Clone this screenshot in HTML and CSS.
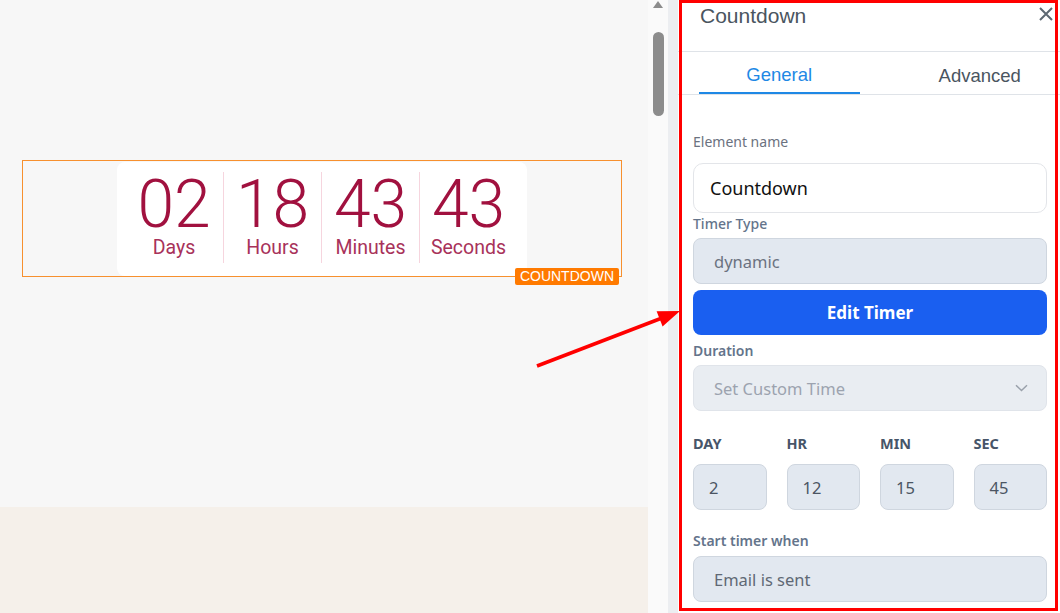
FILE: index.html
```html
<!DOCTYPE html>
<html lang="en">
<head>
<meta charset="utf-8">
<title>Countdown element settings</title>
<link rel="stylesheet" href="styles.css">
</head>
<body>
<div class="app">
  <main class="canvas">
    <section class="stage">
      <div class="element">
        <div class="timer">
          <div class="unit"><span class="num">02</span><span class="cap">Days</span></div>
          <div class="unit"><span class="num">18</span><span class="cap">Hours</span></div>
          <div class="unit"><span class="num">43</span><span class="cap">Minutes</span></div>
          <div class="unit"><span class="num">43</span><span class="cap">Seconds</span></div>
        </div>
        <span class="tag">COUNTDOWN</span>
      </div>
    </section>
    <section class="band"></section>
  </main>

  <div class="scroll">
    <span class="scroll-up"></span>
    <span class="thumb"></span>
  </div>
  <div class="gutter"></div>

  <aside class="panel">
    <header class="head">
      <h1 class="title">Countdown</h1>
      <button class="close" type="button" aria-label="Close">
        <svg width="14" height="14" viewBox="0 0 14 14"><path d="M1 1L13 13M13 1L1 13" stroke="#5d6872" stroke-width="2" fill="none"/></svg>
      </button>
    </header>

    <nav class="tabs">
      <span class="tab active">General</span>
      <span class="tab">Advanced</span>
    </nav>

    <div class="form">
      <div class="label plain">Element name</div>
      <div class="field text">Countdown</div>

      <div class="label mid l-type">Timer Type</div>
      <div class="field f-type">dynamic</div>

      <button class="primary" type="button">Edit Timer</button>

      <div class="label strong l-dur">Duration</div>
      <div class="field select">
        <span>Set Custom Time</span>
        <svg width="13" height="8" viewBox="0 0 13 8"><path d="M1 1.2L6.5 6.5L12 1.2" stroke="#9aa1ab" stroke-width="1.5" fill="none"/></svg>
      </div>

      <div class="units">
        <div class="unit-col"><div class="unit-label">DAY</div><div class="field small">2</div></div>
        <div class="unit-col"><div class="unit-label">HR</div><div class="field small">12</div></div>
        <div class="unit-col"><div class="unit-label">MIN</div><div class="field small">15</div></div>
        <div class="unit-col"><div class="unit-label">SEC</div><div class="field small">45</div></div>
      </div>

      <div class="label strong l-start">Start timer when</div>
      <div class="field f-start">Email is sent</div>
    </div>
  </aside>

  <svg class="pointer" width="1060" height="613" viewBox="0 0 1060 613">
    <line x1="537" y1="366" x2="662" y2="318" stroke="#ff0000" stroke-width="3.5"/>
    <polygon points="680,311 662.6,326.6 656.6,311.2" fill="#ff0000"/>
  </svg>
  <div class="focus"></div>
</div>
</body>
</html>
```

FILE: styles.css
```css
* { box-sizing: border-box; }

html, body {
  margin: 0;
  height: 100%;
}

body {
  font-family: "Noto Sans", "Open Sans", sans-serif;
  overflow: hidden;
  background: #fff;
}

.app {
  position: relative;
  display: flex;
  width: 1060px;
  height: 613px;
}

/* ---------- canvas ---------- */
.canvas {
  width: 648px;
  display: flex;
  flex-direction: column;
}

.stage {
  height: 507px;
  background: #f7f7f7;
  padding: 160px 0 0 22px;
}

.band {
  flex: 1;
  background: #f5f0ea;
}

.element {
  position: relative;
  width: 600px;
  height: 117px;
  border: 1px solid #f7902e;
  display: flex;
  justify-content: center;
  align-items: flex-end;
}

.timer {
  width: 410px;
  height: 114px;
  background: #fff;
  border-radius: 8px;
  display: flex;
  padding: 10px 10px 13px 8px;
}

.unit {
  width: 98px;
  flex: none;
  display: flex;
  flex-direction: column;
  align-items: center;
}

.unit + .unit {
  border-left: 1px solid #f6d5de;
}

.num {
  font-family: Roboto, sans-serif;
  font-weight: 350;
  font-size: 66px;
  line-height: 58px;
  color: #a1113f;
  margin-top: 4px;
}

.cap {
  font-family: Roboto, sans-serif;
  font-size: 19.5px;
  line-height: 22px;
  color: #a8325a;
  margin-top: 3px;
}

.tag {
  position: absolute;
  right: 2px;
  bottom: -9px;
  height: 17px;
  padding: 0 5px;
  border-radius: 2px;
  background: #ff7a00;
  color: #fff;
  font-family: "Liberation Sans", Arial, sans-serif;
  font-size: 14px;
  line-height: 17px;
}

/* ---------- scrollbar ---------- */
.scroll {
  width: 20px;
  background: #fafafa;
  display: flex;
  flex-direction: column;
  align-items: center;
  padding-top: 1px;
}

.scroll-up {
  width: 0;
  height: 0;
  border-left: 5.5px solid transparent;
  border-right: 5.5px solid transparent;
  border-bottom: 7px solid #8c8c8c;
}

.thumb {
  width: 11px;
  height: 84px;
  margin-top: 24px;
  background: #8c8c8c;
  border-radius: 6px;
}

.gutter {
  width: 10px;
  background: #eceef1;
}

/* ---------- settings panel ---------- */
.panel {
  width: 382px;
  background: #fff;
  display: flex;
  flex-direction: column;
}

.head {
  height: 52px;
  border-bottom: 1px solid #dfe3e8;
  display: flex;
  align-items: flex-start;
  padding: 4px 7px 0 22px;
}

.title {
  margin: 0;
  font-family: "Liberation Sans", Arial, sans-serif;
  font-weight: 400;
  font-size: 21px;
  line-height: 24px;
  color: #4a5560;
}

.close {
  margin-left: auto;
  margin-top: 3px;
  padding: 0;
  border: 0;
  background: none;
  width: 14px;
  height: 14px;
  display: block;
}

.close svg { display: block; }

.tabs {
  height: 43px;
  border-bottom: 1px solid #dfe3e8;
  display: flex;
  gap: 40px;
  padding-left: 21px;
}

.tab {
  width: 161px;
  height: 42px;
  display: flex;
  align-items: center;
  justify-content: center;
  padding-top: 6px;
  font-family: "Liberation Sans", Arial, sans-serif;
  font-size: 18.5px;
  color: #4a5560;
}

.tab.active {
  color: #1e88e5;
  border-bottom: 2px solid #1e88e5;
}

.form {
  display: flex;
  flex-direction: column;
  padding: 37px 13px 0 15px;
}

.label {
  font-size: 14px;
  line-height: 20px;
  color: #64748b;
}

.label.plain { color: #6b7280; font-weight: 400; }
.label.mid { font-weight: 500; }
.label.strong { font-weight: 600; }

.l-type { margin-top: 1px; }
.l-dur { margin-top: 6px; }
.l-start { margin-top: 21px; }

.field {
  height: 46px;
  border: 1px solid #cfd6df;
  border-radius: 8px;
  background: #e2e8f0;
  display: flex;
  align-items: center;
  padding-left: 20px;
  font-size: 16.5px;
  color: #6b7280;
}

.field.text {
  height: 50px;
  margin-top: 11px;
  background: #fff;
  border-color: #e3e5e9;
  border-radius: 10px;
  padding-left: 16px;
  color: #111;
  font-size: 18px;
}

.f-type { margin-top: 4px; }

.primary {
  margin-top: 6px;
  height: 45px;
  border: 0;
  border-radius: 8px;
  background: #1a5ff0;
  color: #fff;
  font-family: "Noto Sans", sans-serif;
  font-weight: 700;
  font-size: 17px;
}

.field.select {
  margin-top: 4px;
  background: #e9edf2;
  border-color: #e0e4ea;
  color: #9ca3af;
  justify-content: space-between;
  padding-right: 18px;
}

.field.select svg { display: block; }

.units {
  margin-top: 22px;
  display: grid;
  grid-template-columns: repeat(4, 1fr);
  column-gap: 20px;
}

.unit-label {
  font-size: 14.5px;
  line-height: 20px;
  font-weight: 700;
  color: #475569;
}

.field.small {
  margin-top: 11px;
  padding-left: 15px;
  color: #4b5563;
}

.f-start {
  margin-top: 5px;
  color: #5f6875;
}

/* ---------- annotation overlay ---------- */
.pointer {
  position: absolute;
  left: 0;
  top: 0;
  pointer-events: none;
}

.focus {
  position: absolute;
  left: 679px;
  top: 0;
  width: 379px;
  height: 611px;
  border: 3px solid #ff0000;
  pointer-events: none;
}
```
